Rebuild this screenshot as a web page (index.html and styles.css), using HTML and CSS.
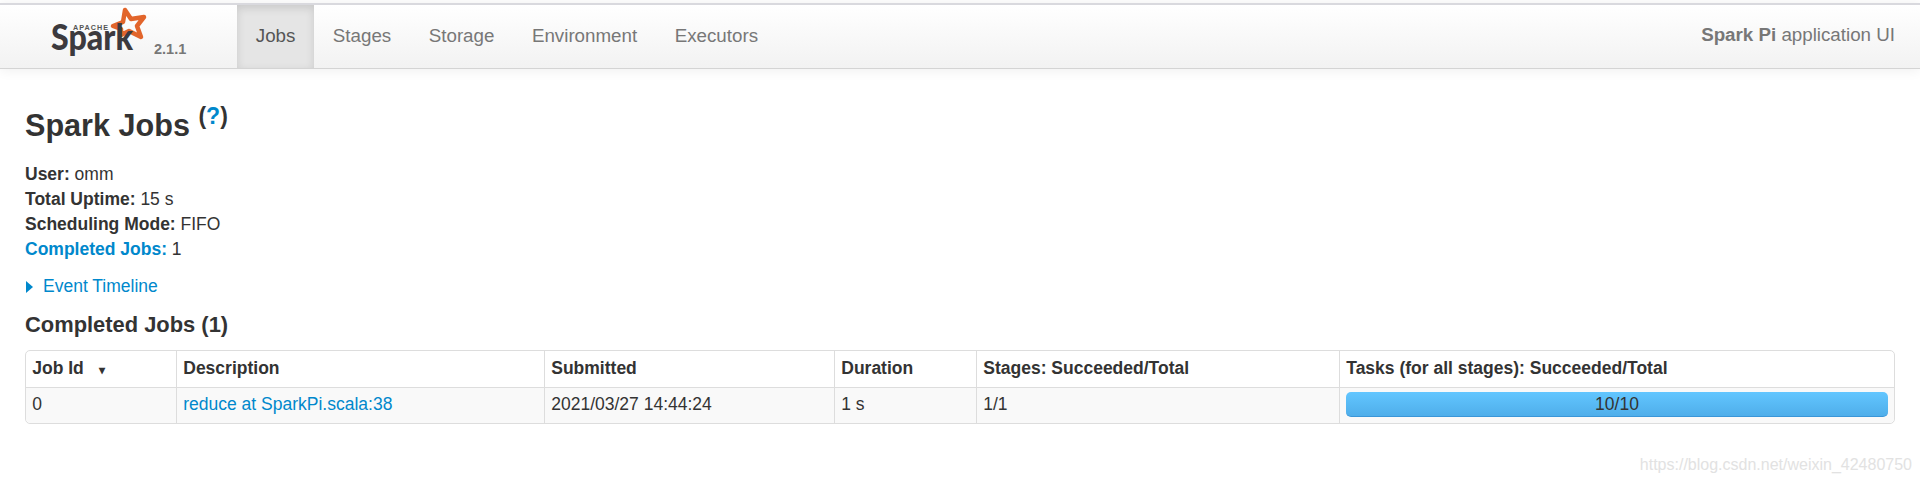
FILE: index.html
```html
<!DOCTYPE html>
<html lang="en">
<head>
<meta charset="utf-8">
<title>Spark Pi - Spark Jobs</title>
<link rel="stylesheet" href="styles.css">
</head>
<body>
<nav class="navbar">
  <a class="brand" href="#">
    <svg class="logo" width="120" height="62" viewBox="0 0 120 62" aria-label="Apache Spark">
      <path class="star" d="M75 5 L81 14 L94 12 L87 21 L91 32 L79 26 L71 30 L71 24 L63 21 L73 17 Z"/>
      <text class="logo-apache" x="23" y="25" textLength="36" lengthAdjust="spacingAndGlyphs">APACHE</text>
      <text class="logo-spark" x="1" y="45" textLength="82" lengthAdjust="spacingAndGlyphs">Spark</text>
    </svg>
    <span class="version">2.1.1</span>
  </a>
  <ul class="nav">
    <li class="nav-item active"><a href="#">Jobs</a></li>
    <li class="nav-item"><a href="#">Stages</a></li>
    <li class="nav-item"><a href="#">Storage</a></li>
    <li class="nav-item"><a href="#">Environment</a></li>
    <li class="nav-item"><a href="#">Executors</a></li>
  </ul>
  <p class="app-title"><strong>Spark Pi</strong> application UI</p>
</nav>
<main class="content">
  <h3 class="page-title">Spark Jobs <sup class="help">(<a href="#">?</a>)</sup></h3>
  <ul class="summary">
    <li><strong>User:</strong> omm</li>
    <li><strong>Total Uptime:</strong> 15 s</li>
    <li><strong>Scheduling Mode:</strong> FIFO</li>
    <li><a href="#"><strong>Completed Jobs:</strong></a> 1</li>
  </ul>
  <p class="timeline"><span class="arrow"></span><a href="#">Event Timeline</a></p>
  <h4 class="section-title">Completed Jobs (1)</h4>
  <table class="jobs">
    <colgroup>
      <col class="c1"><col class="c2"><col class="c3"><col class="c4"><col class="c5"><col class="c6">
    </colgroup>
    <thead>
      <tr>
        <th>Job Id <span class="sort">▾</span></th>
        <th>Description</th>
        <th>Submitted</th>
        <th>Duration</th>
        <th>Stages: Succeeded/Total</th>
        <th>Tasks (for all stages): Succeeded/Total</th>
      </tr>
    </thead>
    <tbody>
      <tr>
        <td>0</td>
        <td><a href="#">reduce at SparkPi.scala:38</a></td>
        <td>2021/03/27 14:44:24</td>
        <td>1 s</td>
        <td>1/1</td>
        <td><div class="progress">10/10</div></td>
      </tr>
    </tbody>
  </table>
</main>
<div class="watermark">https://blog.csdn.net/weixin_42480750</div>
</body>
</html>
```
FILE: styles.css
```css
* { box-sizing: border-box; }
html, body { margin: 0; height: 100%; }
body {
  position: relative;
  padding-top: 3px;
  background: #fff;
  color: #333;
  font-family: "Liberation Sans", Arial, sans-serif;
  font-size: 17.5px;
  line-height: 25px;
  overflow: hidden;
}
a { color: #0088cc; text-decoration: none; }

.navbar {
  display: flex;
  align-items: stretch;
  height: 66px;
  padding-right: 25px;
  background: linear-gradient(#ffffff, #f2f2f2);
  border-top: 2px solid #d9d9de;
  border-bottom: 1.25px solid #d4d4d4;
  box-shadow: 0 1px 12px rgba(0,0,0,0.07);
  font-size: 18.75px;
}
.brand {
  display: flex;
  width: 237px;
  padding-left: 50px;
  flex: none;
}
.logo { flex: none; display: block; }
.star { fill: none; stroke: #e2652b; stroke-width: 4.5; stroke-linejoin: round; }
.logo-apache { font: bold 7px "Liberation Sans", sans-serif; fill: #555; letter-spacing: 1px; }
.logo-spark { font: 900 36px "Lato", "Liberation Sans", sans-serif; fill: #3c3a3e; }
.version {
  margin: 34px 0 0 -16px;
  font-size: 14.5px;
  font-weight: bold;
  line-height: 20px;
  color: #777;
}
.nav { display: flex; margin: 0; padding: 0; list-style: none; }
.nav-item a {
  display: block;
  height: 100%;
  padding: 18px 18.75px 0;
  color: #777;
}
.nav-item.active a {
  background: #e5e5e5;
  color: #555;
  box-shadow: inset 0 3px 8px rgba(0,0,0,0.125);
}
.app-title {
  margin: 0 0 0 auto;
  padding-top: 17px;
  color: #777;
}

.content { padding: 0 25px; }
.page-title {
  margin: 31px 0 0;
  font-size: 30.6px;
  line-height: 50px;
  font-weight: bold;
}
.help { font-size: 23px; line-height: 0; vertical-align: 12px; }
.summary { margin: 12px 0 0; padding: 0; list-style: none; }
.timeline { margin: 12px 0 0; display: flex; align-items: center; }
.arrow {
  width: 0; height: 0;
  margin-right: 10px;
  margin-left: 1px;
  border-left: 7px solid #0088cc;
  border-top: 6px solid transparent;
  border-bottom: 6px solid transparent;
}
.section-title {
  margin: 13px 0 0;
  font-size: 21.9px;
  line-height: 25px;
  font-weight: bold;
}
.jobs {
  width: 1870px;
  margin-top: 13px;
  table-layout: fixed;
  border-collapse: separate;
  border-spacing: 0;
  border: 1.25px solid #dddddd;
  border-radius: 5px;
}
.c1 { width: 150px; }
.c2 { width: 368px; }
.c3 { width: 290px; }
.c4 { width: 142px; }
.c5 { width: 363px; }
th, td {
  text-align: left;
  vertical-align: top;
  border-left: 1.25px solid #dddddd;
}
th { height: 34px; padding: 5px 6.25px 4px; }
td { height: 36px; padding: 4px 6.25px 5px; }
th:first-child, td:first-child { border-left: 0; }
td { background: #f9f9f9; border-top: 1.25px solid #dddddd; }
tbody tr td:first-child { border-bottom-left-radius: 5px; }
tbody tr td:last-child { border-bottom-right-radius: 5px; }
.sort { margin-left: 10px; font-size: 12px; }
.progress {
  height: 25px;
  text-align: center;
  line-height: 25px;
  background: linear-gradient(#62c6ff, #4faeea);
  border-bottom: 1px solid #3a96d8;
  border-radius: 5px;
}
.watermark {
  position: absolute;
  right: 8px;
  bottom: 8px;
  color: #e2e2e2;
  font-size: 16px;
  line-height: 20px;
}
```
